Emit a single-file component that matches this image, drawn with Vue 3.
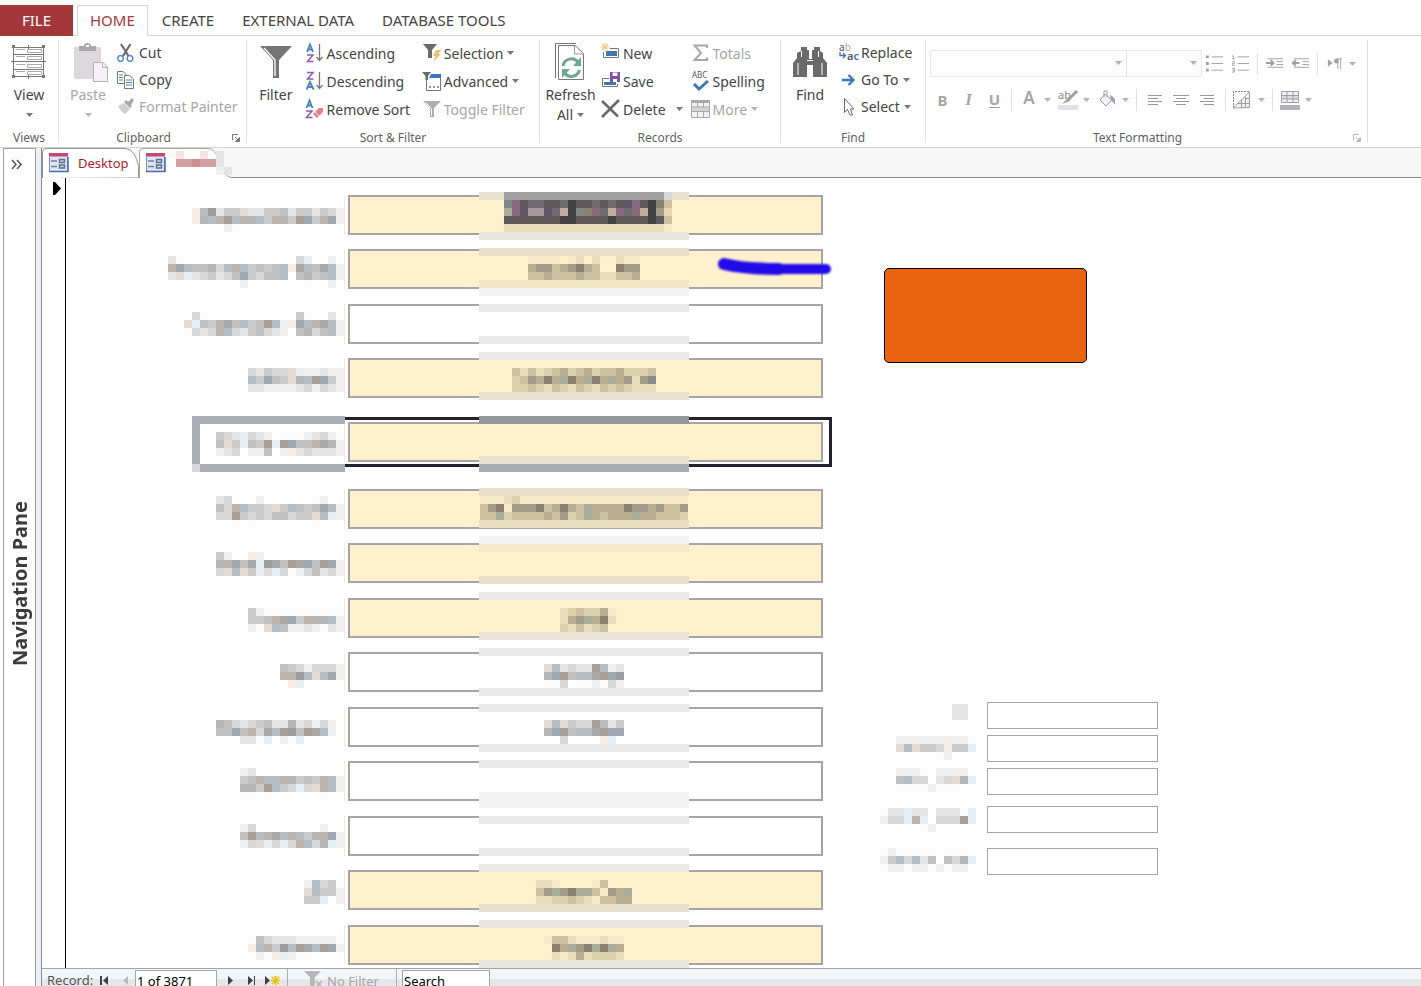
<template>
  <div class="window">
    <nav class="tabs">
      <button class="tab tab-file">FILE</button>
      <button class="tab tab-active">HOME</button>
      <button class="tab">CREATE</button>
      <button class="tab">EXTERNAL DATA</button>
      <button class="tab">DATABASE TOOLS</button>
    </nav>

    <div class="ribbon">
      <section v-for="group in groups" :key="group.id" class="group" :class="'group-' + group.id">
        <div class="group-body">
          <button v-if="group.big" class="big" :disabled="group.big.disabled">
            <svg class="big-icon" viewBox="0 0 36 36" v-html="icons[group.big.icon]"></svg>
            <span>{{ group.big.text }}</span>
            <span v-if="group.big.caret" class="big-more">
              {{ group.big.text2 }}
              <svg class="caret" viewBox="0 0 7 4"><path d="M0 0H7L3.5 4Z" /></svg>
            </span>
          </button>
          <div v-for="(col, c) in group.columns" :key="c" class="column">
            <button
              v-for="item in col"
              :key="item.text"
              class="small"
              :disabled="item.disabled"
            >
              <svg class="small-icon" viewBox="0 0 20 20" v-html="icons[item.icon]"></svg>
              <span>{{ item.text }}</span>
              <svg v-if="item.caret" class="caret" :class="{ split: item.split }" viewBox="0 0 7 4">
                <path d="M0 0H7L3.5 4Z" />
              </svg>
            </button>
          </div>
        </div>
        <footer class="group-footer" :class="{ 'with-launcher': group.launcher }">
          <span>{{ group.title }}</span>
          <svg v-if="group.launcher" class="launcher" viewBox="0 0 8 8" v-html="icons.launcher"></svg>
        </footer>
      </section>

      <section class="group group-text">
        <div class="format">
          <div class="format-row format-row-1">
            <div class="combos">
              <span class="combo combo-font">
                <select aria-label="Font" disabled></select>
                <svg class="caret" viewBox="0 0 7 4"><path d="M0 0H7L3.5 4Z" /></svg>
              </span>
              <span class="combo combo-size">
                <select aria-label="Font Size" disabled></select>
                <svg class="caret" viewBox="0 0 7 4"><path d="M0 0H7L3.5 4Z" /></svg>
              </span>
            </div>
            <template v-for="(tool, i) in listTools" :key="i">
              <i v-if="tool.sep" class="sep"></i>
              <button v-else class="tool" disabled :aria-label="tool.icon">
                <svg class="tool-icon" viewBox="0 0 20 20" v-html="icons[tool.icon]"></svg>
                <svg v-if="tool.caret" class="caret" viewBox="0 0 7 4"><path d="M0 0H7L3.5 4Z" /></svg>
              </button>
            </template>
          </div>
          <div class="format-row format-row-2">
            <button class="tool letter" disabled><b>B</b></button>
            <button class="tool letter italic" disabled><b>I</b></button>
            <button class="tool letter under" disabled><b>U</b></button>
            <i class="sep"></i>
            <button class="tool letter" disabled>
              <b class="color-a">A</b>
              <svg class="caret" viewBox="0 0 7 4"><path d="M0 0H7L3.5 4Z" /></svg>
            </button>
            <template v-for="(tool, i) in styleTools" :key="i">
              <i v-if="tool.sep" class="sep"></i>
              <button v-else class="tool" disabled :aria-label="tool.icon">
                <svg class="tool-icon" viewBox="0 0 20 20" v-html="icons[tool.icon]"></svg>
                <svg v-if="tool.caret" class="caret" viewBox="0 0 7 4"><path d="M0 0H7L3.5 4Z" /></svg>
              </button>
            </template>
          </div>
        </div>
        <footer class="group-footer with-launcher">
          <span>Text Formatting</span>
          <svg class="launcher faded" viewBox="0 0 8 8" v-html="icons.launcher"></svg>
        </footer>
      </section>
    </div>

    <div class="workspace">
      <aside class="nav-pane">
        <button class="expand" aria-label="Open">
          <svg viewBox="0 0 11 9"><path d="M1 0L5 4.500L1 9M6 0L10 4.500L6 9" /></svg>
        </button>
        <span class="nav-title">Navigation Pane</span>
      </aside>

      <main class="document">
        <div class="doc-tabs">
          <button class="doc-tab">
            <svg class="doc-shape" viewBox="0 0 97 30">
              <path d="M.5 30V4Q.5.5 4 .5H82C92 1 94 9 96.500 18V29.500" />
            </svg>
            <svg class="doc-icon" viewBox="0 0 20 20" v-html="icons.form"></svg>
            <span>Desktop</span>
          </button>
          <button class="doc-tab doc-tab-current" aria-label="Form">
            <svg class="doc-shape" viewBox="0 0 97 30">
              <path d="M.5 30V4Q.5.5 4 .5H70C82 2 80 29 93 29.500V30" />
            </svg>
            <svg class="doc-icon" viewBox="0 0 20 20" v-html="icons.form"></svg>
            <svg class="doc-name" viewBox="168 152 64 24">
              <rect
                v-for="(cell, i) in cells(tabName)"
                :key="i"
                :x="cell.x"
                :y="cell.y"
                width="8"
                height="8"
                :fill="cell.fill"
              />
            </svg>
          </button>
        </div>

        <div class="form">
          <div class="selector">
            <svg viewBox="0 0 8 13"><path d="M0 0H2L8 6.500L2 13H0Z" /></svg>
          </div>

          <div class="fields">
            <div
              v-for="(field, i) in fields"
              :key="i"
              class="field"
              :class="{ filled: field.filled, focused: field.focused }"
            >
              <label :for="'field-' + i">
                <svg :viewBox="'160 ' + field.y + ' 184 40'">
                  <rect
                    v-for="(r, k) in field.frame"
                    :key="'f' + k"
                    :x="r[0]"
                    :y="r[1]"
                    :width="r[2]"
                    :height="r[3]"
                    :fill="r[4]"
                  />
                  <rect
                    v-for="(cell, k) in cells(field.label)"
                    :key="k"
                    :x="cell.x"
                    :y="cell.y"
                    width="8"
                    height="8"
                    :fill="cell.fill"
                  />
                </svg>
              </label>
              <div class="box">
                <input :id="'field-' + i" type="text" />
                <svg class="mask" :viewBox="'479 ' + field.y + ' 210 40'">
                  <rect
                    v-for="(b, k) in field.bands"
                    :key="'b' + k"
                    x="479"
                    :y="b[0]"
                    width="210"
                    :height="b[1]"
                    :fill="b[2]"
                  />
                  <rect
                    v-for="(cell, k) in cells(field.value)"
                    :key="k"
                    :x="cell.x"
                    :y="cell.y"
                    width="8"
                    height="8"
                    :fill="cell.fill"
                  />
                </svg>
                <svg v-if="field.marked" class="marker" viewBox="0 0 118 24">
                  <path d="M9 8Q30 13 64 13" stroke-width="12" />
                  <path d="M60 13H111" stroke-width="10" />
                </svg>
              </div>
            </div>
          </div>

          <div class="side">
            <button class="action" aria-label="Action"></button>
            <div class="side-fields">
              <div v-for="(field, i) in sideFields" :key="i" class="side-field">
                <label :for="'side-' + i">
                  <svg :viewBox="'880 ' + field.y + ' 104 27'">
                    <rect
                      v-for="(cell, k) in cells(field.label)"
                      :key="k"
                      :x="cell.x"
                      :y="cell.y"
                      width="8"
                      height="8"
                      :fill="cell.fill"
                    />
                  </svg>
                </label>
                <input :id="'side-' + i" type="text" />
              </div>
            </div>
          </div>
        </div>

        <div class="record-bar">
          <div class="record-inner">
            <label for="record">Record:</label>
            <button aria-label="First record"><svg viewBox="0 0 9 9"><path d="M0 0H2V9H0ZM8 0V9L3 4.500Z" /></svg></button>
            <button aria-label="Previous record" disabled><svg viewBox="0 0 9 9"><path d="M7 0V9L2 4.500Z" /></svg></button>
            <input id="record" class="record-no" type="text" value="1 of 3871" />
            <button aria-label="Next record"><svg viewBox="0 0 9 9"><path d="M2 0V9L7 4.500Z" /></svg></button>
            <button aria-label="Last record"><svg viewBox="0 0 9 9"><path d="M1 0V9L6 4.500ZM7 0H8V9H7Z" /></svg></button>
            <button class="new-record" aria-label="New record">
              <svg viewBox="0 0 16 9">
                <path d="M0 0V9L5 4.500Z" />
                <path class="spark-glow" d="M6 0H15V9H6Z" />
                <path class="spark" d="M6 4.500H15M10.500 0V9M7 1L14 8M14 1L7 8" />
              </svg>
            </button>
            <button class="no-filter" disabled>
              <svg viewBox="0 0 20 16">
                <path class="funnel" d="M1 1H14L9 6V14H6V6Z" />
                <path d="M11 10L17 16M17 10L11 16" />
              </svg>
              <span>No Filter</span>
            </button>
            <input class="search" type="text" value="Search" aria-label="Search" />
          </div>
        </div>
      </main>
    </div>
  </div>
</template>

<script setup>
const icons = {
  launcher: '<path d="M.5 6V.5H6" fill="none" stroke="#777"/><path d="M3 3L6 6M7.500 3.500V7.500H3.500Z" fill="#777" stroke="#777"/>',
  view:
    '<g fill="none" stroke="#777"><path d="M2.500 4.500H32.500V33.500H2.500ZM2.500 11.500H32.500M2.500 18.500H32.500M2.500 26.500H32.500M17.500 2V6M17.500 32V36M0 18.500H3M32 18.500H35"/><path d="M16.500 6.500H30.500V9.500H16.500ZM16.500 13.500H30.500V16.500H16.500ZM16.500 21.500H30.500V24.500H16.500ZM16.500 28.500H30.500V31.500H16.500ZM5 6.500H14M5 13.500H14M5 21.500H14M5 28.500H14" stroke="#aaa"/></g><path d="M1 2H4V5H1ZM31 2H34V5H31ZM1 32H4V35H1ZM31 32H34V35H31Z" fill="#777"/>',
  paste:
    '<path d="M4 4H29Q31 4 31 6V19H23V36H6Q4 36 4 34Z" fill="#dcd8dc"/><path d="M9 3H14Q14 0 17.500 0T21 3H26V8H9Z" fill="#aaa6aa"/><path d="M16 3H19" stroke="#fff" stroke-width="2"/><path d="M23.500 19.500H33L37.500 24V38.500H23.500Z" fill="#f6f2f8" stroke="#b4b0b4"/><path d="M32.500 19.500V24.500H37.500" fill="none" stroke="#b4b0b4"/>',
  cut:
    '<path d="M4 1L11.500 13M13.500 1L6 13" stroke="#6a6a6a" stroke-width="2.200"/><circle cx="3.500" cy="15.500" r="2.800" fill="#fff" stroke="#4a82bd" stroke-width="1.300"/><circle cx="13" cy="15.500" r="2.800" fill="#fff" stroke="#4a82bd" stroke-width="1.300"/>',
  copy:
    '<g fill="#fff" stroke="#777"><path d="M.5 1.500H6L9.500 5V13.500H.5Z"/><path d="M7.500 5.500H12.500L16.500 9V18.500H7.500Z"/></g><path d="M2 5H6M2 7.500H6M2 10H6M9 10H15M9 12.500H15M9 15H15" stroke="#4a82bd"/>',
  painter:
    '<path d="M1 9L7 6L13 12L8 17Q4 15 1 9Z" fill="#cfccd2"/><path d="M7 5L9 3L15 9L13 11ZM11 5L15 1L17 3L14 8Z" fill="#a8a4a8"/>',
  filter:
    '<path d="M2 3H34L21 17V35H15V17Z" fill="#757575"/><path d="M6 5L17 17V33" fill="none" stroke="#fff" stroke-width="1.300"/>',
  asc: '<path d="M2 9L5 1.500L8 9M3 6.500H7" fill="none" stroke="#4a82bd" stroke-width="1.800"/><path d="M2 12H8L2.500 18.500H8.500" fill="none" stroke="#8e5bb0" stroke-width="1.500"/><path d="M14.500 1V17M11.500 14L14.500 17.500L17.500 14" fill="none" stroke="#777" stroke-width="1.300"/>',
  desc: '<path d="M2 1.500H8L2.500 8H8.500" fill="none" stroke="#8e5bb0" stroke-width="1.500"/><path d="M1.500 18.500L5 11L8.500 18.500M2.500 16H7.500" fill="none" stroke="#4a82bd" stroke-width="1.800"/><path d="M14.500 1V17M11.500 14L14.500 17.500L17.500 14" fill="none" stroke="#777" stroke-width="1.300"/>',
  unsort:
    '<path d="M1.500 9L4.500 1.500L7.500 9M2.500 6.500H6.500" fill="none" stroke="#4a82bd" stroke-width="1.800"/><path d="M1 12H7L1.500 18.500H7.500" fill="none" stroke="#8e5bb0" stroke-width="1.500"/><path d="M8 15L14 9H18V13L12 19Z" fill="#e67f8e"/><path d="M10 13L14 17" stroke="#fff"/>',
  selection:
    '<path d="M1 1H15L10 7V15H6V7Z" fill="#6a6a6a"/><path d="M14 7H19L16 11H19L11 19L13.500 13H11Z" fill="#ecc06c"/>',
  advanced:
    '<path d="M0 1H9L6 5V9H3.500V5Z" fill="#6a6a6a"/><path d="M9 3H19V7H7Z" fill="#3f77b5"/><path d="M4.500 9V19.500H18.500V7" fill="none" stroke="#777"/><path d="M7 16H9M11 16H13M15 16H17" stroke="#777" stroke-width="1.500"/>',
  toggle:
    '<path d="M1 2H19L12 9V18H8V9Z" fill="#b0acb0"/><path d="M3.500 3.500L9.500 9.500V17" fill="none" stroke="#fff"/>',
  refresh:
    '<path d="M3.500 35V.5H24" fill="none" stroke="#777"/><path d="M6.500 2.500H23L31.500 10.500V36.500H6.500Z" fill="#fff" stroke="#777"/><path d="M22.500 2.500V11H31.500" fill="none" stroke="#999"/><g fill="none" stroke="#6fa78e" stroke-width="3"><path d="M11 23A8.500 8.500 0 0 1 26 19"/><path d="M27.500 27A8.500 8.500 0 0 1 12.500 30"/></g><path d="M29 14V23H21ZM10 35V26H18Z" fill="#6fa78e"/>',
  new: '<path d="M0 4H8M4 0V8M1 1L7 7M7 1L1 7" stroke="#ecc06c"/><path d="M9 5.500H17.500V14.500H2.500V9" fill="none" stroke="#777"/><path d="M5 8H16V13H5Z" fill="#3f77b5"/>',
  save: '<path d="M8 7.500H1.500V15.500H16.500V13" fill="none" stroke="#777"/><path d="M3 11H15V14H3Z" fill="#3f77b5"/><path d="M9 1H19V11H9Z" fill="#7f4fa3"/><path d="M11.500 1.500H16.500V5H11.500ZM12 8H16V11H12Z" fill="#fff"/>',
  delete:
    '<path d="M1 2L17 17.500M18 1L1 18" stroke="#6a6a6a" stroke-width="2.600"/>',
  totals:
    '<path d="M16 5V2.500H3.500L10 10L3.500 17H16V14.500" fill="none" stroke="#a8a8a8" stroke-width="2"/>',
  spelling:
    '<text x="1" y="7" font-family="Noto Sans, sans-serif" font-size="8" fill="#555">ABC</text><path d="M3 13L8 18L17 10" fill="none" stroke="#3f77b5" stroke-width="3"/>',
  more: '<path d="M.5 1.500H18.500V18.500H.5Z" fill="#f4eef8" stroke="#aaa6aa"/><path d="M0 1H19V4H0Z" fill="#aaa6aa"/><path d="M1 8H18V12H1Z" fill="#d8d4d8"/><path d="M1 8H18M1 12.500H18M6.500 4V8M12.500 4V8M6.500 12V18M12.500 12V18" stroke="#aaa6aa" fill="none"/>',
  find:
    '<path d="M9 4H15V7H17V16H20V7H22V4H28V8L31 10V15L35 20V34H21V22H15V34H1V20L5 15V10L9 8Z" fill="#6a6a6a"/><path d="M9.500 8V14M6 20V32M26.500 8V14M30 20V32M15 17.500H21" stroke="#fff"/>',
  replace:
    '<text x="0" y="8" font-family="Noto Sans, sans-serif" font-size="10" fill="#555">a<tspan fill="#aaa">b</tspan></text><text x="8" y="17" font-family="Noto Sans, sans-serif" font-size="11" font-weight="600" fill="#555">a<tspan fill="#3f77b5">c</tspan></text><path d="M1 9V12.500H6M4 10L6.500 12.500L4 15" fill="none" stroke="#3f77b5" stroke-width="1.300"/>',
  goto: '<path d="M3 10H14M9.500 5L14.500 10L9.500 15" fill="none" stroke="#3f77b5" stroke-width="2.300"/>',
  select:
    '<path d="M5.500 1.500V15.500L8.500 12.500L11 18H13.500L11.500 12H15Z" fill="#fff" stroke="#6a6a6a"/>',
  bullets:
    '<path d="M7 2.500H19M7 9.500H19M7 16.500H19" stroke="#a0a0a0"/><path d="M1 1H4V4H1ZM1 8H4V11H1ZM1 15H4V18H1Z" fill="#a0a0a0"/>',
  numbering:
    '<path d="M7 2.500H19M7 9.500H19M7 16.500H19" stroke="#a0a0a0"/><path d="M1 1.500H2.500V4.500M1 4.500H4M1 7.500H3.500V9.500H1.500V11.500H4M1 14.500H3.500V18.500H1M1.500 16.500H3.500" fill="none" stroke="#a0a0a0"/>',
  indent:
    '<path d="M3 4.500H19M12 7.500H19M12 10.500H19M3 13.500H19" stroke="#a0a0a0"/><path d="M1 9H8M6 6L9 9L6 12" fill="none" stroke="#a0a0a0" stroke-width="2"/>',
  outdent:
    '<path d="M3 4.500H19M12 7.500H19M12 10.500H19M3 13.500H19" stroke="#a0a0a0"/><path d="M9 9H2M5 6L2 9L5 12" fill="none" stroke="#a0a0a0" stroke-width="2"/>',
  pilcrow:
    '<path d="M3 5L8 9L3 13Z" fill="#a0a0a0"/><path d="M12 4.500H18M13.500 4.500V15M16.500 4.500V15" stroke="#a0a0a0" fill="none"/><circle cx="12" cy="7" r="2.500" fill="#a0a0a0"/>',
  highlight:
    '<text x="0" y="9" font-family="Noto Sans, sans-serif" font-size="11" fill="#888">ab</text><path d="M19 1L10 10" stroke="#a0a0a0" stroke-width="3"/><path d="M10 8L12 11L4 14Z" fill="#a0a0a0"/><path d="M0 15H20V20H0Z" fill="#e4dfe6"/>',
  bucket:
    '<path d="M8 4L15 10L9 16L3 10Z" fill="#f4eef8" stroke="#a0a0a0"/><path d="M7 7V1H10V7" fill="none" stroke="#a0a0a0"/><path d="M13 5Q19 7 18 15Q16 11 14 11Z" fill="#a0a0a0"/>',
  left: '<path d="M4 5.500H18M4 8.500H14M4 11.500H18M4 14.500H14" stroke="#999"/>',
  center: '<path d="M2 5.500H18M5 8.500H15M2 11.500H18M5 14.500H15" stroke="#999"/>',
  right: '<path d="M2 5.500H16M6 8.500H16M2 11.500H16M6 14.500H16" stroke="#999"/>',
  gridlines:
    '<path d="M.5 18V1.500H17" fill="none" stroke="#888" stroke-dasharray="2 1"/><path d="M0 18L16.500 2V17.500Z" fill="#f4eef8" stroke="#a0a0a0"/><path d="M8.500 10V18M12.500 7V18M12 8.500H16M5 13.500H16" stroke="#a0a0a0"/>',
  rowcolor:
    '<path d="M1.500 1.500H18.500V12.500H1.500Z" fill="#f4eef8" stroke="#a0a0a0"/><path d="M2 5H18V9H2Z" fill="#dcd8dc"/><path d="M1 5.500H19M1 9H19M7 1V12M13 1V12" stroke="#a0a0a0"/><path d="M0 15H20V20H0Z" fill="#b4b2b4"/>',
  form:
    '<path d="M.5 1.500H18.500V18.500H.5Z" fill="#dbe7f6" stroke="#7f8fae"/><path d="M0 18.500H19V4" fill="none" stroke="#4f6aa5" stroke-width="1.500"/><path d="M0 0H19V4H0Z" fill="#bf4a76"/><path d="M0 3.500H19" stroke="#e08fa9"/><path d="M2 8H8M2 13.500H8" stroke="#6f7f99" stroke-width="1.500"/><path d="M10.500 6.500H15.500V9.500H10.500ZM10.500 12H15.500V15H10.500Z" fill="#c5d3e8" stroke="#5f7291" stroke-width="1.500"/>',
}

const groups = [
  {
    id: 'views',
    title: 'Views',
    big: { icon: 'view', text: 'View', caret: true },
    columns: [],
  },
  {
    id: 'clipboard',
    title: 'Clipboard',
    launcher: true,
    big: { icon: 'paste', text: 'Paste', caret: true, disabled: true },
    columns: [
      [
        { icon: 'cut', text: 'Cut' },
        { icon: 'copy', text: 'Copy' },
        { icon: 'painter', text: 'Format Painter', disabled: true },
      ],
    ],
  },
  {
    id: 'sort',
    title: 'Sort & Filter',
    big: { icon: 'filter', text: 'Filter' },
    columns: [
      [
        { icon: 'asc', text: 'Ascending' },
        { icon: 'desc', text: 'Descending' },
        { icon: 'unsort', text: 'Remove Sort' },
      ],
      [
        { icon: 'selection', text: 'Selection', caret: true },
        { icon: 'advanced', text: 'Advanced', caret: true },
        { icon: 'toggle', text: 'Toggle Filter', disabled: true },
      ],
    ],
  },
  {
    id: 'records',
    title: 'Records',
    big: { icon: 'refresh', text: 'Refresh', text2: 'All', caret: true },
    columns: [
      [
        { icon: 'new', text: 'New' },
        { icon: 'save', text: 'Save' },
        { icon: 'delete', text: 'Delete', caret: true, split: true },
      ],
      [
        { icon: 'totals', text: 'Totals', disabled: true },
        { icon: 'spelling', text: 'Spelling' },
        { icon: 'more', text: 'More', caret: true, disabled: true },
      ],
    ],
  },
  {
    id: 'find',
    title: 'Find',
    big: { icon: 'find', text: 'Find' },
    columns: [
      [
        { icon: 'replace', text: 'Replace' },
        { icon: 'goto', text: 'Go To', caret: true },
        { icon: 'select', text: 'Select', caret: true },
      ],
    ],
  },
]

const listTools = [
  { icon: 'bullets' },
  { icon: 'numbering' },
  { sep: true },
  { icon: 'indent' },
  { icon: 'outdent' },
  { sep: true },
  { icon: 'pilcrow', caret: true },
]

const styleTools = [
  { icon: 'highlight', caret: true },
  { icon: 'bucket', caret: true },
  { sep: true },
  { icon: 'left' },
  { icon: 'center' },
  { icon: 'right' },
  { sep: true },
  { icon: 'gridlines', caret: true },
  { sep: true },
  { icon: 'rowcolor', caret: true },
]

// one character per 8px block
const palette = {
  0: '#fafafa', 1: '#efefef', 2: '#e4e4e4', 3: '#d8d8d8', 4: '#cccccc',
  5: '#c0c0c0', 6: '#b5b5b5', 7: '#a9a9a9', 8: '#9d9d9f', 9: '#8a8a8a',
  b: '#b6bec4', B: '#a1a8af', r: '#bab3ae', R: '#a8a09d', p: '#f6ece6',
  s: '#e6edf3', w: '#e2dad6',
  a: '#f5e8c6', c: '#e8dcba', d: '#dbd0ac', e: '#cbc09f', f: '#b8ae92',
  g: '#a39c88', h: '#8a8070', j: '#a9ad9a', k: '#d2bf9f',
  x: '#444343', y: '#605a5b', z: '#706b6e', q: '#86697c', m: '#a8979b',
  n: '#c0ad9f', t: '#7f8a84', v: '#5d5466', l: '#e9d4b4', o: '#a1a1a1',
  P: '#f3e4e8', Q: '#d3a0a6', S: '#cf8f8c',
}

// draws a mosaic: x, y of the first block, then its rows
const cells = (mosaic) => {
  if (!mosaic) return []
  const [x, y, ...rows] = mosaic
  const list = []
  rows.forEach((row, r) => {
    row.split('').forEach((ch, c) => {
      if (ch !== '.') list.push({ x: x + c * 8, y: y + r * 8, fill: palette[ch] })
    })
  })
  return list
}

const tabName = [168, 152, '0P..P.2', '.QQSQQ2', '......12']

const fields = [
  {
    y: 195,
    filled: true,
    label: [192, 208, 'pb8244w224452442431', 'p6brRbr6b4r64RB4rB1', '....10'],
    value: [
      504, 192,
      'oooooooooooooooooooo3',
      'tqyzzyyzxyyzyzyvqyxhk',
      'jqvmmvznxthqznqzqnxgl',
      'yyyyyyyxxyyyyxyyyyxye',
      'cccccccccccccccccccca',
    ],
    bands: [[192, 8, '#e8e2d3'], [232, 8, '#e7e6e0']],
  },
  {
    y: 249,
    filled: true,
    marked: true,
    label: [168, 256, '20..............3s..1', 'rBb5563brb4545bp7b57b1', '2ws234235B4355b.5645b1', '.........1.......0..1'],
    value: [528, 256, 'aaaa.ac.c..caa', 'fggefghfe..hgg', 'eefekefeecceef'],
    bands: [[248, 8, '#e8e0c8'], [280, 8, '#f3e8c5'], [288, 8, '#f3f3f3']],
  },
  {
    y: 304,
    label: [184, 312, '.30...........40..2.', 'ws54r75b45Rb1pBbr7b1', '0323rb3245321.5635b1'],
    bands: [[304, 8, '#e8e8e8'], [336, 8, '#e8e8e8']],
  },
  {
    y: 358,
    filled: true,
    label: [248, 368, '32433ws11211', 'b4B54w6bRB41', '221111231321'],
    value: [512, 368, 'ececdefdefdeefddde', 'degfhfjhfjhfjfgcg9', 'ddedcedcedcededccc'],
    bands: [[352, 8, '#e8e8e8'], [392, 8, '#e8e0d0']],
  },
  {
    y: 422,
    filled: true,
    focused: true,
    label: [216, 432, '432s321.00012310', '5w4s54RsRB55r761', '123.115.1p232221'],
    frame: [
      [192, 416, 153, 8, '#acadb2'],
      [192, 424, 8, 40, '#acadb2'],
      [192, 464, 8, 8, '#d8d8da'],
      [200, 464, 145, 8, '#acadb2'],
    ],
    bands: [[416, 8, '#95969b'], [456, 8, '#e8e0d0'], [464, 8, '#abacb2']],
  },
  {
    y: 489,
    filled: true,
    label: [216, 496, '23...1......01', '53rb443w4b545Bb1', '33R434355344wbs1', '..0.0.......0'],
    value: [480, 496, 'aaacdaaaaaaaaaaaaaaaaaaaaa', 'kghaggghefhfejffffhggfgkeg', 'kejdeeekfegdejfefffjffeked'],
    bands: [[488, 8, '#e8e0c8'], [520, 8, '#e8dec0']],
  },
  {
    y: 543,
    filled: true,
    label: [216, 552, '41..p1', '6rB57s875R7B5RB1', '3wbw4sws30135231'],
    bands: [[536, 8, '#f3f3f3'], [544, 8, '#f3e9c6'], [576, 8, '#e8e0c8']],
  },
  {
    y: 598,
    filled: true,
    label: [248, 608, '410000000000', '445r7B4r66b1', '10wb51121021'],
    value: [560, 608, 'cdeddfa', 'cfgjfhc', 'dcecde.'],
    bands: [[592, 8, '#e8e8e8'], [632, 8, '#e9e3d6']],
  },
  {
    y: 652,
    label: [280, 664, '54313331', 'rr8bwbB1', '.ps'],
    value: [544, 664, 'wb2322Rb12', '6BR5bb7RB8', '003.001031'],
    bands: [[648, 8, '#e8e8e8'], [688, 8, '#e8e8e8']],
  },
  {
    y: 707,
    label: [216, 720, '653234522623131', '55B5r37bR85R7b1', '...220s.10s'],
    value: [544, 720, 'wbw433Rb24', '6BR5bb7RBB', '..3....ps.'],
    bands: [[704, 8, '#e8e8e8'], [744, 8, '#e8e8e8']],
  },
  {
    y: 761,
    label: [240, 768, '12', '45rbbr6454rb1', '664Rb43s3wrb1', '00.0......0'],
    bands: [[760, 8, '#e8e8e8'], [792, 16, '#f3f3f3']],
  },
  {
    y: 816,
    label: [240, 824, '13........1', '5Rbr7brb46rB1', '13ws3s3rb36s1'],
    bands: [[816, 8, '#e8e8e8'], [848, 8, '#e8e8e8']],
  },
  {
    y: 870,
    filled: true,
    label: [304, 880, '1b340', 'wb441', '44s.1'],
    value: [536, 880, 'cca....ae...', 'kgjghjjkagfj', 'ccddedcaekff'],
    bands: [[864, 8, '#e8e8e5'], [904, 8, '#e8e0cc']],
  },
  {
    y: 925,
    filled: true,
    label: [248, 936, '053222111110', 'pbr48bR7bRB1', '.10ps100'],
    value: [544, 936, 'aeecaaacaa', '.hfjghjhjf', '.cacfcdddc'],
    bands: [[920, 8, '#e8e7e2'], [960, 8, '#e8e6de']],
  },
]

const sideFields = [
  { y: 702, label: [952, 704, '22', '22'] },
  { y: 735, label: [896, 736, '111111p110', 'wbw443p44s', '.....01'] },
  { y: 768, label: [896, 768, '1110.1111', '5b33.23w6s', '00001000'] },
  { y: 806, label: [880, 808, '022s22.2220s', '133srs.333Rs', '.....01'] },
  { y: 848, label: [880, 848, '0100000.000', '14b3b25.536s', '01101101011'] },
]
</script>

<style>
html,
body {
  margin: 0;
  background: #fff;
}
</style>

<style scoped>
.window {
  height: 100vh;
  display: flex;
  flex-direction: column;
  overflow: hidden;
  font-family: "Noto Sans", "Open Sans", sans-serif;
  font-size: 14px;
  color: #444;
}

button {
  padding: 0;
  border: 0;
  background: none;
  font: inherit;
  color: inherit;
}

svg {
  display: block;
  flex: none;
  overflow: visible;
}

.caret {
  width: 7px;
  height: 4px;
  fill: #777;
}

button:disabled {
  color: #a6a6a6;
}

button:disabled .caret {
  fill: #b4b4b4;
}

/* ribbon tabs */
.tabs {
  display: flex;
  height: 31px;
  padding-top: 5px;
  box-shadow: inset 0 -1px #d5d5d5;
}

.tab {
  padding: 0 13px 2px;
  border: 1px solid transparent;
  border-bottom: 0;
  font-size: 15px;
}

.tab-file {
  width: 73px;
  margin-right: 4px;
  background: #a4373a;
  color: #fff;
}

.tab-active {
  padding: 0 12px 2px;
  border-color: #d5d5d5;
  background: #fff;
  color: #a4373a;
}

/* ribbon */
.ribbon {
  display: flex;
  flex: none;
  height: 103px;
  padding: 4px 0;
  border-bottom: 1px solid #d5d5d5;
}

.group {
  box-sizing: border-box;
  flex: none;
  display: flex;
  flex-direction: column;
  border-right: 1px solid #e1e1e1;
}

.group-views { width: 59px; }
.group-clipboard { width: 188px; }
.group-sort { width: 293px; }
.group-records { width: 241px; }
.group-find { width: 145px; }
.group-text { width: 442px; }

.group-body {
  flex: 1;
  display: flex;
}

.big {
  width: 58px;
  display: flex;
  flex-direction: column;
  align-items: center;
  line-height: 20px;
}

.big-icon {
  width: 36px;
  height: 36px;
  margin: 3px 0 6px;
}

.big-more {
  display: flex;
  align-items: center;
  gap: 4px;
}

.big-more .caret {
  margin: 8px 0;
}

.column {
  display: flex;
  flex-direction: column;
  margin-top: -1px;
}

.small {
  height: 28px;
  display: flex;
  align-items: center;
  white-space: nowrap;
}

.group-clipboard .small,
.group-find .small {
  height: 27px;
}

.small-icon {
  width: 20px;
  height: 20px;
  margin-right: 2px;
}

.small .caret {
  margin-left: 4px;
}

.small .split {
  margin-left: 10px;
}

.group-sort .column {
  width: 118px;
}

.group-records .big {
  width: 62px;
}

.group-records .column {
  width: 91px;
}

.group-footer {
  position: relative;
  flex: none;
  height: 14px;
  font-size: 12px;
  line-height: 18px;
  text-align: center;
  color: #5f5f5f;
}

.with-launcher {
  padding-right: 18px;
}

.launcher {
  position: absolute;
  right: 6px;
  top: 5px;
  width: 8px;
  height: 8px;
}

.faded {
  opacity: 0.5;
}

/* text formatting */
.format {
  flex: 1;
  padding: 10px 0 0 4px;
}

.format-row {
  display: flex;
  align-items: center;
  gap: 7px;
  height: 27px;
}

.format-row-2 {
  margin-top: 9px;
  padding-left: 3px;
}

.combos {
  display: flex;
  margin-right: -4px;
}

.combo {
  position: relative;
}

.combo select {
  box-sizing: border-box;
  display: block;
  width: 100%;
  height: 27px;
  border: 1px solid #e1e1e1;
  border-radius: 0;
  background: #fdfdfd;
  appearance: none;
}

.combo .caret {
  position: absolute;
  right: 5px;
  top: 11px;
  fill: #b4b4b4;
}

.combo-font {
  width: 197px;
  margin-right: -1px;
}

.combo-size {
  width: 76px;
}

.sep {
  width: 1px;
  height: 22px;
  background: #e1e1e1;
}

.tool {
  min-width: 19px;
  display: flex;
  align-items: center;
  gap: 5px;
}

.tool-icon {
  width: 20px;
  height: 20px;
}

.format-row-1 .tool-icon {
  width: 19px;
}

.letter {
  justify-content: center;
  font-size: 15px;
}

.italic {
  font-family: "Liberation Serif", serif;
  font-style: italic;
  font-size: 17px;
}

.under b {
  border-bottom: 1px solid #a0a0a0;
  line-height: 15px;
}

.color-a {
  width: 20px;
  padding-bottom: 3px;
  font-size: 17px;
  line-height: 20px;
  font-weight: 600;
}

/* workspace */
.workspace {
  flex: 1;
  min-height: 0;
  display: flex;
}

.nav-pane {
  box-sizing: border-box;
  width: 33px;
  margin-left: 3px;
  display: flex;
  flex-direction: column;
  align-items: center;
  border: 1px solid #9aa0aa;
  border-bottom: 0;
}

.expand {
  margin: 11px 6px 0 0;
}

.expand svg {
  width: 11px;
  height: 9px;
  fill: none;
  stroke: #555;
  stroke-width: 1.500;
}

.nav-title {
  margin: auto 0;
  padding-bottom: 12px;
  writing-mode: vertical-rl;
  transform: rotate(180deg);
  font-size: 20px;
  line-height: 24px;
  font-weight: 700;
  color: #3b3b3b;
}

.document {
  flex: 1;
  min-width: 0;
  margin-left: 5px;
  display: flex;
  flex-direction: column;
  border-left: 1px solid #868b98;
  background: #fff;
  box-shadow: -5px 0 #edf0f4;
}

.doc-tabs {
  flex: none;
  height: 29px;
  display: flex;
  background: #f7f7f7;
  border-bottom: 1px solid #888b90;
}

.doc-tab {
  position: relative;
  width: 97px;
  display: flex;
  align-items: center;
  color: #a8222f;
  font-size: 13px;
}

.doc-shape {
  position: absolute;
  left: 0;
  top: 0;
  width: 97px;
  height: 30px;
  fill: #fff;
  stroke: #8e959e;
}

.doc-tab-current .doc-shape {
  stroke: #b0a496;
}

.doc-icon {
  position: relative;
  width: 20px;
  height: 20px;
  margin: 0 9px 0 7px;
}

.doc-tab span {
  position: relative;
}

.doc-name {
  position: relative;
  width: 64px;
  height: 24px;
  margin-left: -7px;
}

.form {
  flex: 1;
  min-height: 0;
  display: flex;
  overflow: hidden;
}

.selector {
  flex: none;
  width: 23px;
  border-right: 1px solid #000;
}

.selector svg {
  width: 8px;
  height: 13px;
  margin: 4px 0 0 11px;
}

.fields {
  flex: none;
  padding: 17px 0 0 94px;
}

.field {
  display: flex;
  height: 40px;
  margin-bottom: 14px;
}

.field:nth-child(2),
.field:nth-child(7),
.field:nth-child(9),
.field:nth-child(11),
.field:nth-child(13) {
  margin-bottom: 15px;
}

.field label {
  width: 184px;
  border-right: 1px solid #ebebe4;
  margin-right: 3px;
}

.field label svg {
  width: 184px;
  height: 40px;
}

.box {
  position: relative;
  width: 475px;
}

.field input {
  box-sizing: border-box;
  width: 100%;
  height: 40px;
  padding: 0 8px;
  border: 2px solid #a5a5a5;
  border-radius: 0;
  background: #fff;
  text-align: center;
}

.filled input {
  background: #fff0ce;
}

.focused {
  margin: 24px 0 27px;
}

.focused .box::before {
  content: "";
  position: absolute;
  inset: -5px -9px -5px -3px;
  border: solid #21222f;
  border-width: 3px 3px 3px 0;
}

.focused input {
  position: relative;
}

.mask {
  position: absolute;
  left: 131px;
  top: 0;
  width: 210px;
  height: 40px;
}

.marker {
  position: absolute;
  right: -10px;
  top: 7px;
  width: 118px;
  height: 24px;
  fill: none;
  stroke: #210be8;
  stroke-linecap: round;
  filter: blur(1px);
}

.side {
  padding: 90px 0 0 61px;
}

.action {
  display: block;
  width: 203px;
  height: 95px;
  border: 1px solid #000;
  border-radius: 5px;
  background: #ea6310;
}

.side-fields {
  margin: 339px 0 0 -4px;
}

.side-field {
  display: flex;
  margin-bottom: 6px;
}

.side-field:nth-child(3) {
  margin-bottom: 11px;
}

.side-field:nth-child(4) {
  margin-bottom: 15px;
}

.side-field label {
  width: 107px;
}

.side-field label svg {
  width: 104px;
  height: 27px;
}

.side-field input {
  box-sizing: border-box;
  width: 171px;
  height: 27px;
  border: 1px solid #a5a5a5;
  border-radius: 0;
}

/* record navigation */
.record-bar {
  flex: none;
  height: 17px;
  overflow: hidden;
  border-top: 1px solid #a2a4ae;
  background: linear-gradient(#f4f5f7 60%, #e6e7eb 60%);
}

.record-inner {
  display: flex;
  height: 23px;
  padding-left: 5px;
  font-size: 13px;
  color: #555;
}

.record-inner > label {
  width: 47px;
  line-height: 22px;
}

.record-inner > button {
  display: flex;
  align-items: center;
  justify-content: center;
  width: 21px;
}

.record-inner button svg {
  width: 9px;
  height: 9px;
  fill: #3c4048;
}

.record-inner button:disabled svg {
  fill: #b9b9bf;
}

.record-inner input {
  box-sizing: border-box;
  margin-top: 1px;
  height: 21px;
  padding: 0 1px;
  border: 1px solid #a2a4ae;
  border-radius: 0;
  background: #fff;
  font: inherit;
  color: #000;
}

.record-no {
  width: 82px;
  margin: 0 3px 0 -1px;
}

.record-inner .new-record {
  width: 25px;
  padding-right: 3px;
}

.record-inner .new-record svg {
  width: 16px;
}

.spark-glow {
  fill: #fdf0b0;
}

.spark {
  fill: none;
  stroke: #e3bd3a;
  stroke-width: 1.500;
}

.record-inner .no-filter {
  width: 110px;
  gap: 2px;
  border: solid #a9abb5;
  border-width: 0 1px;
}

.record-inner .no-filter svg {
  width: 20px;
  height: 16px;
  stroke: #b4b0b4;
  stroke-width: 1.500;
  margin-bottom: 4px;
}

.search {
  width: 88px;
  margin-left: 5px;
}
</style>
